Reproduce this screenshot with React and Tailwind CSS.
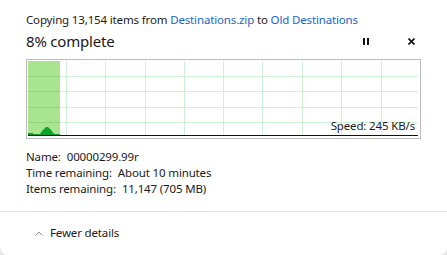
const vLines = [39, 78, 118, 157, 196, 235, 275, 314, 354]
const hLines = [16, 31, 47, 62]

function SpeedGraph() {
  return (
    <div className="relative mt-[8px] h-[80px] w-[395px] border border-[#bcbcbc] bg-white">
      <svg width="393" height="78" className="block" shapeRendering="crispEdges">
        <rect x="1" y="1" width="32" height="75" fill="#a9e491" />
        {vLines.map((x) => (
          <rect key={x} x={x} y="1" width="1" height="74" fill="#ccf1d4" />
        ))}
        {hLines.map((y) => (
          <g key={y}>
            <rect x="33" y={y} width="358" height="1" fill="#ccf1d4" />
            <rect x="1" y={y} width="32" height="1" fill="#8fd57c" />
          </g>
        ))}
        <path
          d="M1 73 L6 73 L6 74 L13 74 L15 71 L17 69 L19 67 L21 67 L23 69 L25 71 L26 73 L28 74 L33 74 L33 76 L1 76 Z"
          fill="#0ba32a"
          shapeRendering="auto"
        />
        <rect x="1" y="75" width="390" height="1" fill="#111111" />
      </svg>
      <span className="absolute bottom-[4px] right-[5px] text-[11.5px] leading-[16px] tracking-[-0.15px] text-[#1a1a1a]">
        Speed: 245 KB/s
      </span>
    </div>
  )
}

export default function App() {
  return (
    <div className="h-[255px] w-[447px] bg-[#e6e6e6] font-['Noto_Sans','Liberation_Sans',sans-serif]">
      <div className="flex h-[255px] w-[447px] flex-col rounded-b-[8px] bg-white">
        <div className="pl-[26px] pt-[12px]">
          <p className="text-[11.5px] leading-[16px] tracking-[-0.15px] text-[#1a1a1a]">
            Copying 13,154 items from <span className="text-[#1a64c8]">Destinations.zip</span> to{' '}
            <span className="text-[#1a64c8]">Old Destinations</span>
          </p>
          <div className="mt-[3px] flex h-[20px] w-[395px] items-center">
            <p className="flex-1 text-[15px] leading-[20px] tracking-[-0.2px] text-[#1a1a1a]">8% complete</p>
            <div className="mr-[39px] flex h-[7px] w-[6px] gap-[2px]">
              <div className="h-[7px] w-[2px] bg-[#111]" />
              <div className="h-[7px] w-[2px] bg-[#111]" />
            </div>
            <svg width="7" height="7" viewBox="0 0 7 7" className="mr-[6px]">
              <path d="M0.5 0.5 L6.5 6.5 M6.5 0.5 L0.5 6.5" stroke="#111" strokeWidth="1.6" />
            </svg>
          </div>
          <SpeedGraph />
          <div className="mt-[10px] text-[11.5px] leading-[16px] tracking-[-0.15px] text-[#1a1a1a]">
            <p>
              Name:<span className="ml-[6px]">00000299.99r</span>
            </p>
            <p>
              Time remaining:<span className="ml-[6px]">About 10 minutes</span>
            </p>
            <p>
              Items remaining:<span className="ml-[6px]">11,147 (705 MB)</span>
            </p>
          </div>
        </div>
        <div className="mt-[14px] h-px w-full bg-[#e3e3e3]" />
        <div className="flex h-[42px] items-center pl-[35px]">
          <svg width="8" height="5" viewBox="0 0 8 5" className="mr-[7px]">
            <path d="M0.5 4.5 L4 1 L7.5 4.5" fill="none" stroke="#8a8a8a" strokeWidth="1" />
          </svg>
          <span className="text-[11.5px] leading-[16px] tracking-[-0.15px] text-[#1a1a1a]">Fewer details</span>
        </div>
      </div>
    </div>
  )
}
